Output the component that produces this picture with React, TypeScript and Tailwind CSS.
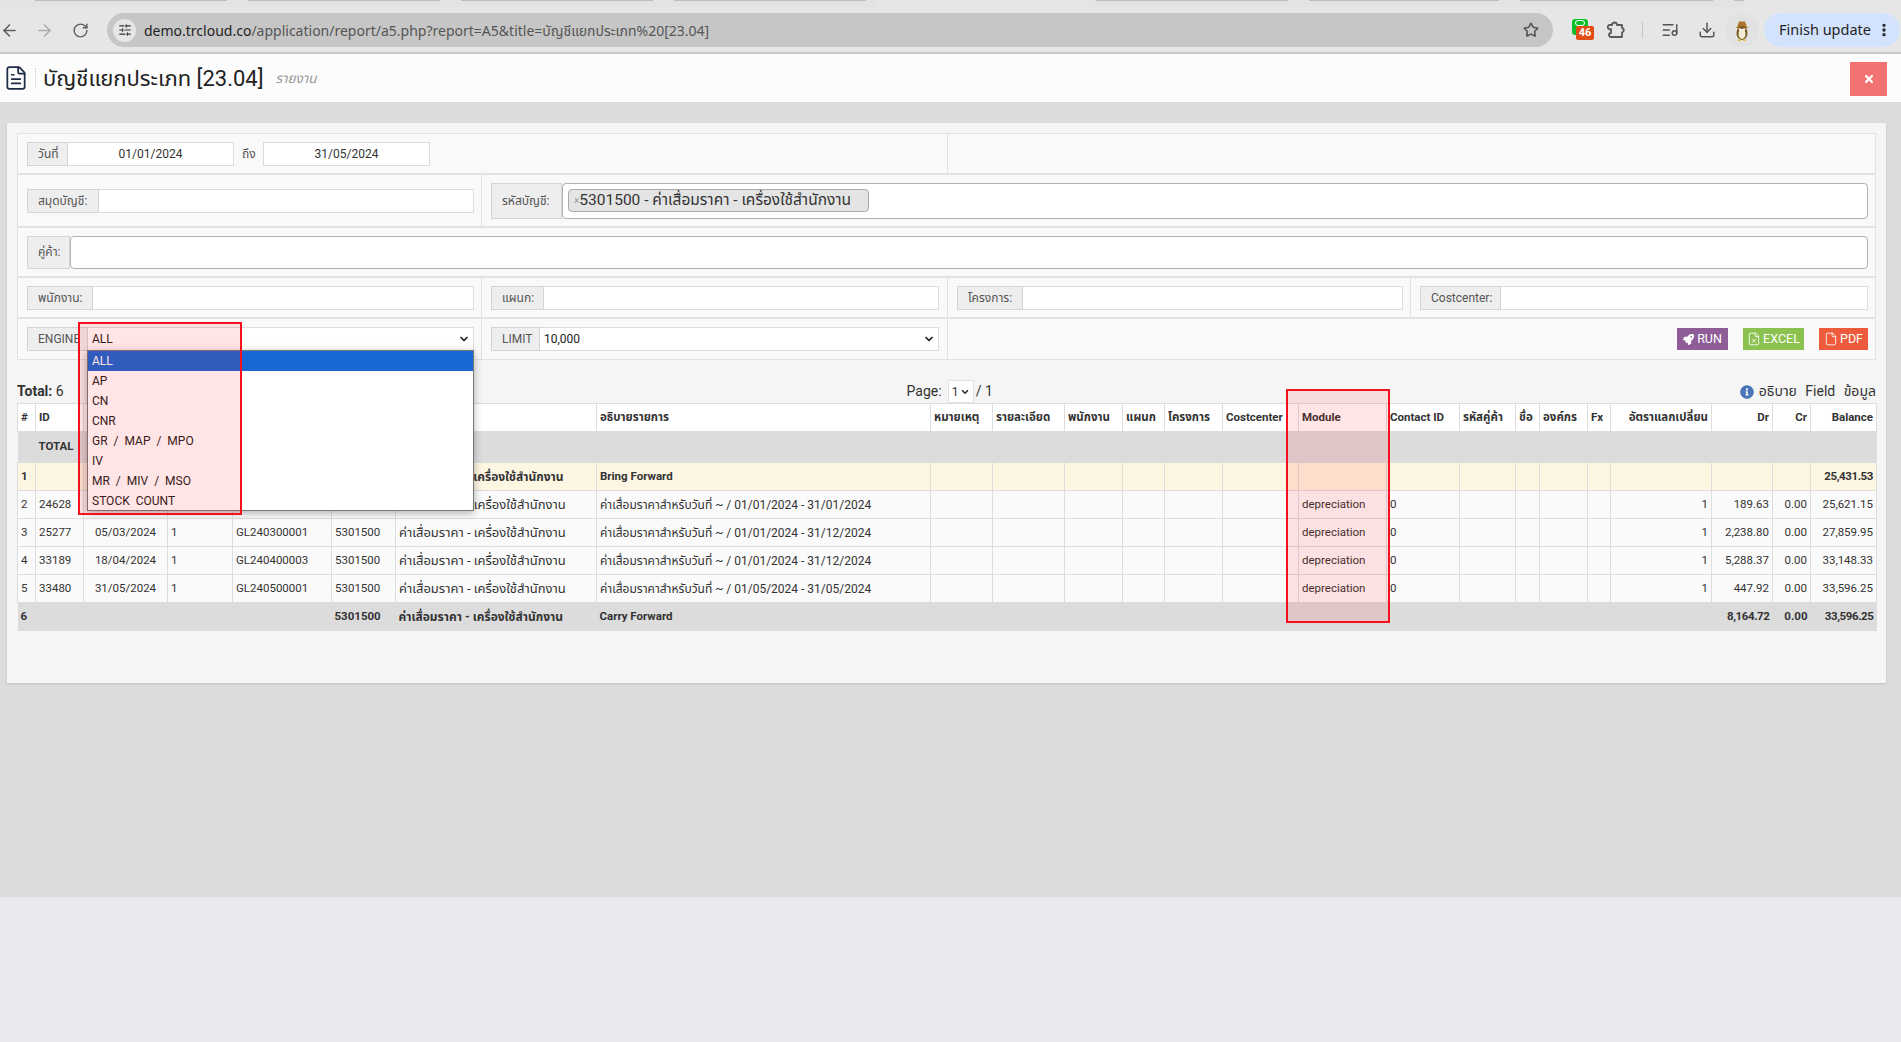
import React from "react";
import { ChevronDown, ArrowLeft, ArrowRight, RotateCw, Star, ListMusic, Download, EllipsisVertical, SlidersHorizontal, FileText, FileX, File } from "lucide-react";
import { FaInfoCircle, FaRocket, FaTimes } from "react-icons/fa";

const FONT = "font-['Roboto','Noto_Sans_Thai','Noto_Sans','DejaVu_Sans',sans-serif]";

function Label({ children, w, h = "h-[24px]" }: { children: React.ReactNode; w: string; h?: string }) {
  return (
    <div className={`${w} ${h} shrink-0 flex items-center pl-[10px] bg-[#eeeeee] border border-[#d4d4d4] text-[12px] text-[#555]`}>
      {children}
    </div>
  );
}

function Plain({ children, className = "" }: { children?: React.ReactNode; className?: string }) {
  return (
    <div className={`h-[24px] bg-white border border-[#dddddd] border-l-0 text-[12px] text-[#333] flex items-center ${className}`}>
      {children}
    </div>
  );
}

function Field({ label, lw }: { label: string; lw: string }) {
  return (
    <div className="flex flex-1">
      <Label w={lw}>{label}</Label>
      <Plain className="flex-1" />
    </div>
  );
}

function Sel({ value }: { value: string }) {
  return (
    <div className="flex-1 h-[24px] bg-white border border-[#dddddd] border-l-0 text-[12px] text-[#222] flex items-center justify-between pl-[4px] pr-[3px]">
      <span>{value}</span>
      <ChevronDown size={12} strokeWidth={3.5} className="text-[#222]" />
    </div>
  );
}

const cols = [18, 48, 84, 65, 99, 64, 201, 334, 62, 72, 58, 42, 58, 76, 88, 73, 56, 24, 48, 23, 101, 61, 38, 66];
const head: [string, string][] = [
  ["#", "text-left"], ["ID", "text-left"], ["", "text-left"], ["", "text-left"], ["", "text-left"], ["", "text-left"], ["", "text-left"],
  ["อธิบายรายการ", "text-left"], ["หมายเหตุ", "text-left"], ["รายละเอียด", "text-left"], ["พนักงาน", "text-left"], ["แผนก", "text-left"], ["โครงการ", "text-left"], ["Costcenter", "text-left"], ["Module", "text-left"],
  ["Contact ID", "text-left"], ["รหัสคู่ค้า", "text-left"], ["ชื่อ", "text-left"], ["องค์กร", "text-left"], ["Fx", "text-left"], ["อัตราแลกเปลี่ยน", "text-right"], ["Dr", "text-right"], ["Cr", "text-right"], ["Balance", "text-right"],
];

const NAME = "ค่าเสื่อมราคา - เครื่องใช้สำนักงาน";
const rows = [
  ["2", "24628", "", "", "", "", "ค่าเสื่อมราคาสำหรับวันที่ ~ / 01/01/2024 - 31/01/2024", "189.63", "25,621.15"],
  ["3", "25277", "05/03/2024", "1", "GL240300001", "5301500", "ค่าเสื่อมราคาสำหรับวันที่ ~ / 01/01/2024 - 31/12/2024", "2,238.80", "27,859.95"],
  ["4", "33189", "18/04/2024", "1", "GL240400003", "5301500", "ค่าเสื่อมราคาสำหรับวันที่ ~ / 01/01/2024 - 31/12/2024", "5,288.37", "33,148.33"],
  ["5", "33480", "31/05/2024", "1", "GL240500001", "5301500", "ค่าเสื่อมราคาสำหรับวันที่ ~ / 01/05/2024 - 31/05/2024", "447.92", "33,596.25"],
];

const td = "border border-[#dddddd] px-[3px] overflow-hidden whitespace-nowrap";

function Blank({ n }: { n: number }) {
  return <>{Array.from({ length: n }).map((_, i) => <td key={i} className={td} />)}</>;
}

const options = ["ALL", "AP", "CN", "CNR", "GR / MAP / MPO", "IV", "MR / MIV / MSO", "STOCK COUNT"];

function TabStrip({ w, tabs, pl, r }: { w: string; tabs: number[]; pl: string; r: string }) {
  return (
    <div className={`${w} ${pl} ${r} h-[7px] bg-[#e3e3e3] flex gap-[21px]`}>
      {tabs.map((t, i) => (
        <div key={i} className="h-[1px] bg-[#bdbdbd]" style={{ width: t }} />
      ))}
    </div>
  );
}

export default function App() {
  return (
    <div className={`relative min-h-[1042px] flex flex-col bg-[#e9e9ee] ${FONT}`}>
      {/* Browser chrome */}
      <div className="h-[54px] shrink-0 bg-[#e6e6e6] border-b-2 border-[#c9c9c9] flex flex-col">
        <div className="h-[7px] flex">
          <TabStrip w="w-[877px]" pl="pl-[35px]" r="rounded-br-[8px]" tabs={[192, 192, 192, 192]} />
          <div className="w-[209px]" />
          <TabStrip w="w-[660px]" pl="pl-[10px]" r="rounded-b-[8px]" tabs={[192, 190, 193, 10]} />
        </div>
        <div className="h-[34px] mt-[6px] flex items-center">
          <div className="w-[107px] flex items-center text-[#5f5f5f]">
            <ArrowLeft size={19} />
            <ArrowRight size={19} className="ml-[16px] text-[#acacac]" />
            <RotateCw size={17} className="ml-[18px]" />
          </div>
          <div className="w-[1446px] h-[34px] rounded-full bg-[#c6c6c6] flex items-center pl-[6px] pr-[14px]">
            <div className="w-[23px] h-[23px] rounded-full bg-[#e6e6e6] flex items-center justify-center">
              <SlidersHorizontal size={14} className="text-[#333]" />
            </div>
            <div className="ml-[8px] text-[14px] font-['Noto_Sans','Noto_Sans_Thai',sans-serif] text-[#555] whitespace-nowrap">
              <span className="text-[#1f1f1f]">demo.trcloud.co</span>/application/report/a5.php?report=A5&amp;title=บัญชีแยกประเภท%20[23.04]
            </div>
            <Star size={16} strokeWidth={2.4} className="ml-auto text-[#555]" />
          </div>
          <div className="relative w-[16px] h-[16px] ml-[19px] -mt-[7px] rounded-[3px] bg-[#0cc02a] shrink-0">
            <div className="absolute left-[3px] top-[1px] w-[10px] h-[6px] rounded-full border border-white" />
            <div className="absolute left-[4px] top-[7px] rounded-[2px] bg-[#e04e14] text-white text-[11px] font-bold leading-[14px] w-[18px] text-center">46</div>
          </div>
          <svg width="20" height="20" viewBox="0 0 20 20" className="ml-[18px] shrink-0" fill="none" stroke="#5a5a5a" strokeWidth="1.8" strokeLinejoin="round">
            <path d="M3 5 H6 A2.5 2.5 0 0 1 11 5 H16 V8 A2.3 2.3 0 0 1 16 12.5 V17 H5 A2 2 0 0 1 5 13 V9 A2 2 0 0 1 3 5 Z" />
          </svg>
          <div className="w-[1px] h-[16px] bg-[#c4c4c4] ml-[16px] shrink-0" />
          <ListMusic size={18} className="ml-[18px] text-[#555] shrink-0" />
          <Download size={18} className="ml-[19px] text-[#555] shrink-0" />
          <div className="w-[34px] h-[34px] ml-[9px] rounded-full bg-[#e2e2e2] flex items-center justify-center shrink-0">
            <svg width="18" height="21" viewBox="0 0 18 21">
              <path d="M4 7 L6 1.5 H12 L14 7 L16 8 H2 Z" fill="#a9762a" />
              <ellipse cx="9" cy="13" rx="5.5" ry="7" fill="#7a5a22" />
              <ellipse cx="9" cy="14" rx="3.5" ry="5" fill="#f4ecd2" />
              <circle cx="7" cy="9.5" r="1.2" fill="#fff" />
              <circle cx="11" cy="9.5" r="1.2" fill="#fff" />
              <path d="M5 19.5 H8 V21 H5 Z M10 19.5 H13 V21 H10 Z" fill="#e8c040" />
            </svg>
          </div>
          <div className="w-[136px] h-[34px] ml-[5px] rounded-full bg-[#d3e3fd] flex items-center pl-[15px] text-[14.5px] text-[#1f1f1f] font-['Noto_Sans',sans-serif] whitespace-nowrap shrink-0">
            Finish update
            <EllipsisVertical size={16} strokeWidth={3} className="ml-[5px] shrink-0" />
          </div>
        </div>
      </div>

      {/* Page title */}
      <div className="h-[48px] shrink-0 bg-[#fcfcfc] flex items-center pl-[3px] pr-[14px]">
        <FileText size={26} strokeWidth={1.6} className="text-[#1f2a44]" />
        <div className="ml-[6px] w-[1px] h-[20px] border-l border-dotted border-[#ccc]" />
        <div className="ml-[7px] text-[22px] text-[#222] whitespace-nowrap">บัญชีแยกประเภท [23.04]</div>
        <div className="ml-[12px] text-[13.5px] italic text-[#999]">รายงาน</div>
        <div className="ml-auto mt-[2px] w-[37px] h-[34px] bg-[#f27171] flex items-center justify-center">
          <FaTimes size={12} className="text-white" />
        </div>
      </div>

      {/* Grey main */}
      <div className="h-[795px] shrink-0 bg-[#dcdcdc] pt-[21px] pl-[7px] pr-[15px]">
        <div className="h-[560px] bg-[#f5f5f5] pt-[10px] pl-[10px] pr-[10px] shadow-[0_1px_2px_rgba(0,0,0,0.12)]">
          {/* Filter form */}
          <div className="border border-[#e2e2e2] bg-[#f9f9f9] text-[12px]">
            <div className="h-[41px] flex border-b-2 border-[#e2e2e2]">
              <div className="w-[930px] flex items-center pl-[9px] border-r border-[#e2e2e2]">
                <Label w="w-[41px]">วันที่</Label>
                <Plain className="w-[166px] justify-center">01/01/2024</Plain>
                <span className="w-[29px] pl-[8px] text-[#555]">ถึง</span>
                <div className="w-[167px] h-[24px] bg-white border border-[#dddddd] flex items-center justify-center text-[#333]">31/05/2024</div>
              </div>
            </div>
            <div className="h-[53px] flex border-b-2 border-[#e2e2e2]">
              <div className="w-[464px] flex items-center pl-[9px] pr-[7px] border-r border-[#e2e2e2]">
                <Field label="สมุดบัญชี:" lw="w-[72px]" />
              </div>
              <div className="flex-1 flex items-center pl-[9px] pr-[7px]">
                <Label w="w-[71px]" h="h-[36px]">รหัสบัญชี:</Label>
                <div className="flex-1 h-[36px] bg-white border border-[#b0b0b0] rounded-[4px] flex items-center pl-[5px]">
                  <div className="h-[23px] w-[301px] rounded-[4px] bg-[#e4e4e4] border border-[#aaa] flex items-center pl-[5px] text-[15.5px] text-[#333] whitespace-nowrap overflow-hidden">
                    <span className="text-[10px] text-[#999]">×</span>5301500 - ค่าเสื่อมราคา - เครื่องใช้สำนักงาน
                  </div>
                </div>
              </div>
            </div>
            <div className="h-[50px] flex items-center pl-[9px] pr-[7px] border-b-2 border-[#e2e2e2]">
              <Label w="w-[43px]" h="h-[33px]">คู่ค้า:</Label>
              <div className="flex-1 h-[33px] bg-white border border-[#b0b0b0] rounded-[4px]" />
            </div>
            <div className="h-[41px] flex border-b-2 border-[#e2e2e2]">
              <div className="w-[464px] flex items-center pl-[9px] pr-[7px] border-r border-[#e2e2e2]"><Field label="พนักงาน:" lw="w-[66px]" /></div>
              <div className="w-[466px] flex items-center pl-[9px] pr-[8px] border-r border-[#e2e2e2]"><Field label="แผนก:" lw="w-[53px]" /></div>
              <div className="w-[463px] flex items-center pl-[9px] pr-[7px] border-r border-[#e2e2e2]"><Field label="โครงการ:" lw="w-[66px]" /></div>
              <div className="flex-1 flex items-center pl-[9px] pr-[7px]"><Field label="Costcenter:" lw="w-[81px]" /></div>
            </div>
            <div className="h-[40px] flex">
              <div className="w-[464px] flex items-center pl-[9px] pr-[7px] border-r border-[#e2e2e2]">
                <Label w="w-[61px]">ENGINE</Label>
                <Sel value="ALL" />
              </div>
              <div className="w-[466px] flex items-center pl-[9px] pr-[8px] border-r border-[#e2e2e2]">
                <Label w="w-[49px]">LIMIT</Label>
                <Sel value="10,000" />
              </div>
              <div className="flex-1 flex items-center justify-end gap-[15px] pr-[7px] text-white text-[12.5px]">
                <div className="w-[51px] h-[22px] bg-[#8e5c96] flex items-center justify-center gap-[3px]"><FaRocket size={11} />RUN</div>
                <div className="w-[61px] h-[22px] bg-[#8bc24f] flex items-center justify-center gap-[2px]"><FileX size={14} strokeWidth={1.5} />EXCEL</div>
                <div className="w-[49px] h-[22px] bg-[#ee5a3c] flex items-center justify-center gap-[2px]"><File size={14} strokeWidth={1.5} />PDF</div>
              </div>
            </div>
          </div>

          {/* Info line */}
          <div className="h-[43px] flex items-end text-[14px] text-[#333]">
            <div className="flex-1 pb-[1px]"><b>Total:</b> 6</div>
            <div className="flex items-center mr-[747px]">
              Page:
              <div className="ml-[6px] w-[26px] h-[23px] bg-white border border-[#e4e4e4] flex items-center justify-center gap-[1px] text-[12px]">
                1<ChevronDown size={10} strokeWidth={4} />
              </div>
              <span className="ml-[2px]">/ 1</span>
            </div>
            <div className="flex items-center gap-[5px] pb-[1px] [word-spacing:5px]">
              <FaInfoCircle size={14} className="text-[#4a76b8]" />
              อธิบาย Field ข้อมูล
            </div>
          </div>

          {/* Table */}
          <table className="table-fixed w-[1859px] border-collapse text-[11.5px] text-[#333]">
            <colgroup>
              {cols.map((c, i) => <col key={i} style={{ width: c }} />)}
            </colgroup>
            <thead>
              <tr className="h-[28px] bg-white font-bold">
                {head.map(([h, a], i) => <th key={i} className={`${td} ${a} font-bold`}>{h}</th>)}
              </tr>
            </thead>
            <tbody>
              <tr className="h-[31px] bg-[#dcdcdc] font-bold">
                <td className="px-[3px]" />
                <td className="px-[3px]">TOTAL</td>
                <td colSpan={22} />
              </tr>
              <tr className="h-[28px] bg-[#fdf6e3] font-bold">
                <td className={td}>1</td>
                <Blank n={5} />
                <td className={`${td} text-[12px]`}>{NAME}</td>
                <td className={td}>Bring Forward</td>
                <Blank n={15} />
                <td className={`${td} text-right tracking-[-0.4px]`}>25,431.53</td>
              </tr>
              {rows.map((r) => (
                <tr key={r[0]} className="h-[28px] bg-[#fafafa]">
                  <td className={td}>{r[0]}</td>
                  <td className={td}>{r[1]}</td>
                  <td className={`${td} text-center`}>{r[2]}</td>
                  <td className={td}>{r[3]}</td>
                  <td className={td}>{r[4]}</td>
                  <td className={td}>{r[5]}</td>
                  <td className={`${td} text-[13px]`}>{NAME}</td>
                  <td className={`${td} text-[12px]`}>{r[6]}</td>
                  <Blank n={6} />
                  <td className={td}>depreciation</td>
                  <td className={td}>0</td>
                  <Blank n={4} />
                  <td className={`${td} text-right`}>1</td>
                  <td className={`${td} text-right`}>{r[7]}</td>
                  <td className={`${td} text-right`}>0.00</td>
                  <td className={`${td} text-right`}>{r[8]}</td>
                </tr>
              ))}
              <tr className="h-[28px] bg-[#dcdcdc] font-bold">
                <td colSpan={5} className="px-[3px]">6</td>
                <td className="px-[3px]">5301500</td>
                <td className="px-[3px] text-[12px]">{NAME}</td>
                <td className="px-[3px]">Carry Forward</td>
                <td colSpan={13} />
                <td className="px-[3px] text-right tracking-[-0.4px]">8,164.72</td>
                <td className="px-[3px] text-right">0.00</td>
                <td className="px-[3px] text-right tracking-[-0.4px]">33,596.25</td>
              </tr>
            </tbody>
          </table>
        </div>
      </div>

      {/* Open select list */}
      <div className="absolute left-[87px] top-[350px] w-[387px] h-[161px] bg-white border border-[#777] shadow-[0_2px_8px_rgba(0,0,0,0.3)] text-[12px] text-[#222] z-10">
        {options.map((o, i) => (
          <div key={o} className={`h-[20px] pl-[4px] flex items-center whitespace-nowrap [word-spacing:3px] ${i === 0 ? "bg-[#1967d2] text-white" : ""}`}>
            {o}
          </div>
        ))}
      </div>

      {/* Red annotation boxes */}
      <div className="absolute left-[78px] top-[322px] w-[164px] h-[193px] border-2 border-[#f5101e] bg-[#ff0000]/10 z-20" />
      <div className="absolute left-[1286px] top-[389px] w-[104px] h-[234px] border-2 border-[#f5101e] bg-[#ff0000]/10 z-20" />
    </div>
  );
}
